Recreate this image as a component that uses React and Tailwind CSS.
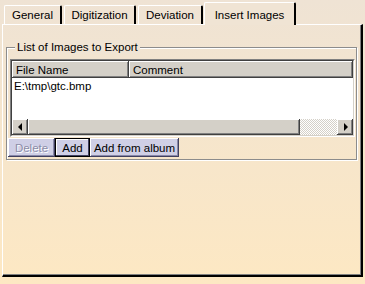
import React from "react";

const raised = "shadow-[inset_-1px_-1px_0_#404040,inset_1px_1px_0_#ffffff,inset_-2px_-2px_0_#808080]";

function Tab({ label, selected, w }) {
  if (selected) {
    return (
      <div
        className={`relative z-10 -mb-px h-[23px] ${w} rounded-t-[2px] border-l border-t border-white border-r-2 border-r-black bg-[#f0e4d4] flex items-start justify-center pt-[5px] -ml-px`}
      >
        <span>{label}</span>
      </div>
    );
  }
  return (
    <div
      className={`h-[19px] ${w} rounded-t-[2px] border-l border-t border-white border-r-2 border-r-black flex items-start justify-center pt-[2px] mr-[2px]`}
    >
      <span>{label}</span>
    </div>
  );
}

function Btn({ children, w, disabled, def }) {
  return (
    <div
      className={`h-[19px] ${w} flex items-center justify-center bg-[#cfcfe6] ${
        def
          ? "border border-black shadow-[inset_-1px_-1px_0_#404060,inset_1px_1px_0_#ffffff]"
          : "shadow-[inset_-1px_-1px_0_#404060,inset_1px_1px_0_#ffffff,inset_-2px_-2px_0_#8888a8]"
      }`}
    >
      <span
        className={
          disabled
            ? "text-[#8c8ca8] [text-shadow:1px_1px_0_#ffffff]"
            : "text-black"
        }
      >
        {children}
      </span>
    </div>
  );
}

export default function App() {
  return (
    <div
      className="w-[365px] h-[284px] overflow-hidden bg-gradient-to-b from-[#efe3d4] to-[#fde8c3] text-[11.5px] leading-[14px] text-black"
      style={{ fontFamily: '"Liberation Sans", Arial, sans-serif' }}
    >
      <div className="flex items-end pl-[4px] pt-[2px] h-[24px]">
        <Tab label="General" w="w-[58px]" />
        <Tab label="Digitization" w="w-[72px]" />
        <Tab label="Deviation" w="w-[65px]" />
        <Tab label="Insert Images" w="w-[92px]" selected />
      </div>
      <div className="ml-[2px] w-[361px] h-[253px] border-l border-t border-white shadow-[inset_-1px_-1px_0_#808080] border-r-2 border-b-2 border-r-black border-b-black">
        <div className="relative ml-[3px] mt-[22px] w-[351px] h-[113px] border border-[#8c8c8c] shadow-[inset_1px_1px_0_#ffffff,1px_1px_0_#ffffff]">
          <div className="absolute -top-[8px] left-[8px] px-[2px] bg-[#f0e4d4] leading-[14px]">
            List of Images to Export
          </div>
          <div className="ml-[3px] mt-[11px] w-[345px] h-[78px] bg-white border border-[#808080] border-r-white border-b-white">
            <div className="w-full h-full border border-[#404040] border-r-[#d4d0c8] border-b-[#d4d0c8] flex flex-col">
              <div className="flex h-[17px] bg-[#d4d0c8] shrink-0">
                <div className={`w-[117px] h-full ${raised} flex items-center pl-[4px]`}>File Name</div>
                <div className={`flex-1 h-full ${raised} flex items-center pl-[4px]`}>Comment</div>
              </div>
              <div className="flex-1 pl-[2px] pt-[1px]">E:\tmp\gtc.bmp</div>
              <div className="flex h-[16px] shrink-0">
                <div className={`w-[16px] h-full bg-[#d4d0c8] ${raised} flex items-center justify-center`}>
                  <div className="w-0 h-0 border-y-[4px] border-y-transparent border-r-[4px] border-r-black -ml-px" />
                </div>
                <div className={`w-[272px] h-full bg-[#d4d0c8] ${raised}`} />
                <div className="flex-1 h-full bg-[repeating-conic-gradient(#d4d0c8_0_25%,#ffffff_0_50%)] bg-[length:2px_2px]" />
                <div className={`w-[16px] h-full bg-[#d4d0c8] ${raised} flex items-center justify-center`}>
                  <div className="w-0 h-0 border-y-[4px] border-y-transparent border-l-[4px] border-l-black ml-px" />
                </div>
              </div>
            </div>
          </div>
          <div className="flex ml-[1px] mt-[1px]">
            <Btn w="w-[47px]" disabled>Delete</Btn>
            <Btn w="w-[35px]" def>Add</Btn>
            <Btn w="w-[89px]">Add from album</Btn>
          </div>
        </div>
      </div>
    </div>
  );
}
